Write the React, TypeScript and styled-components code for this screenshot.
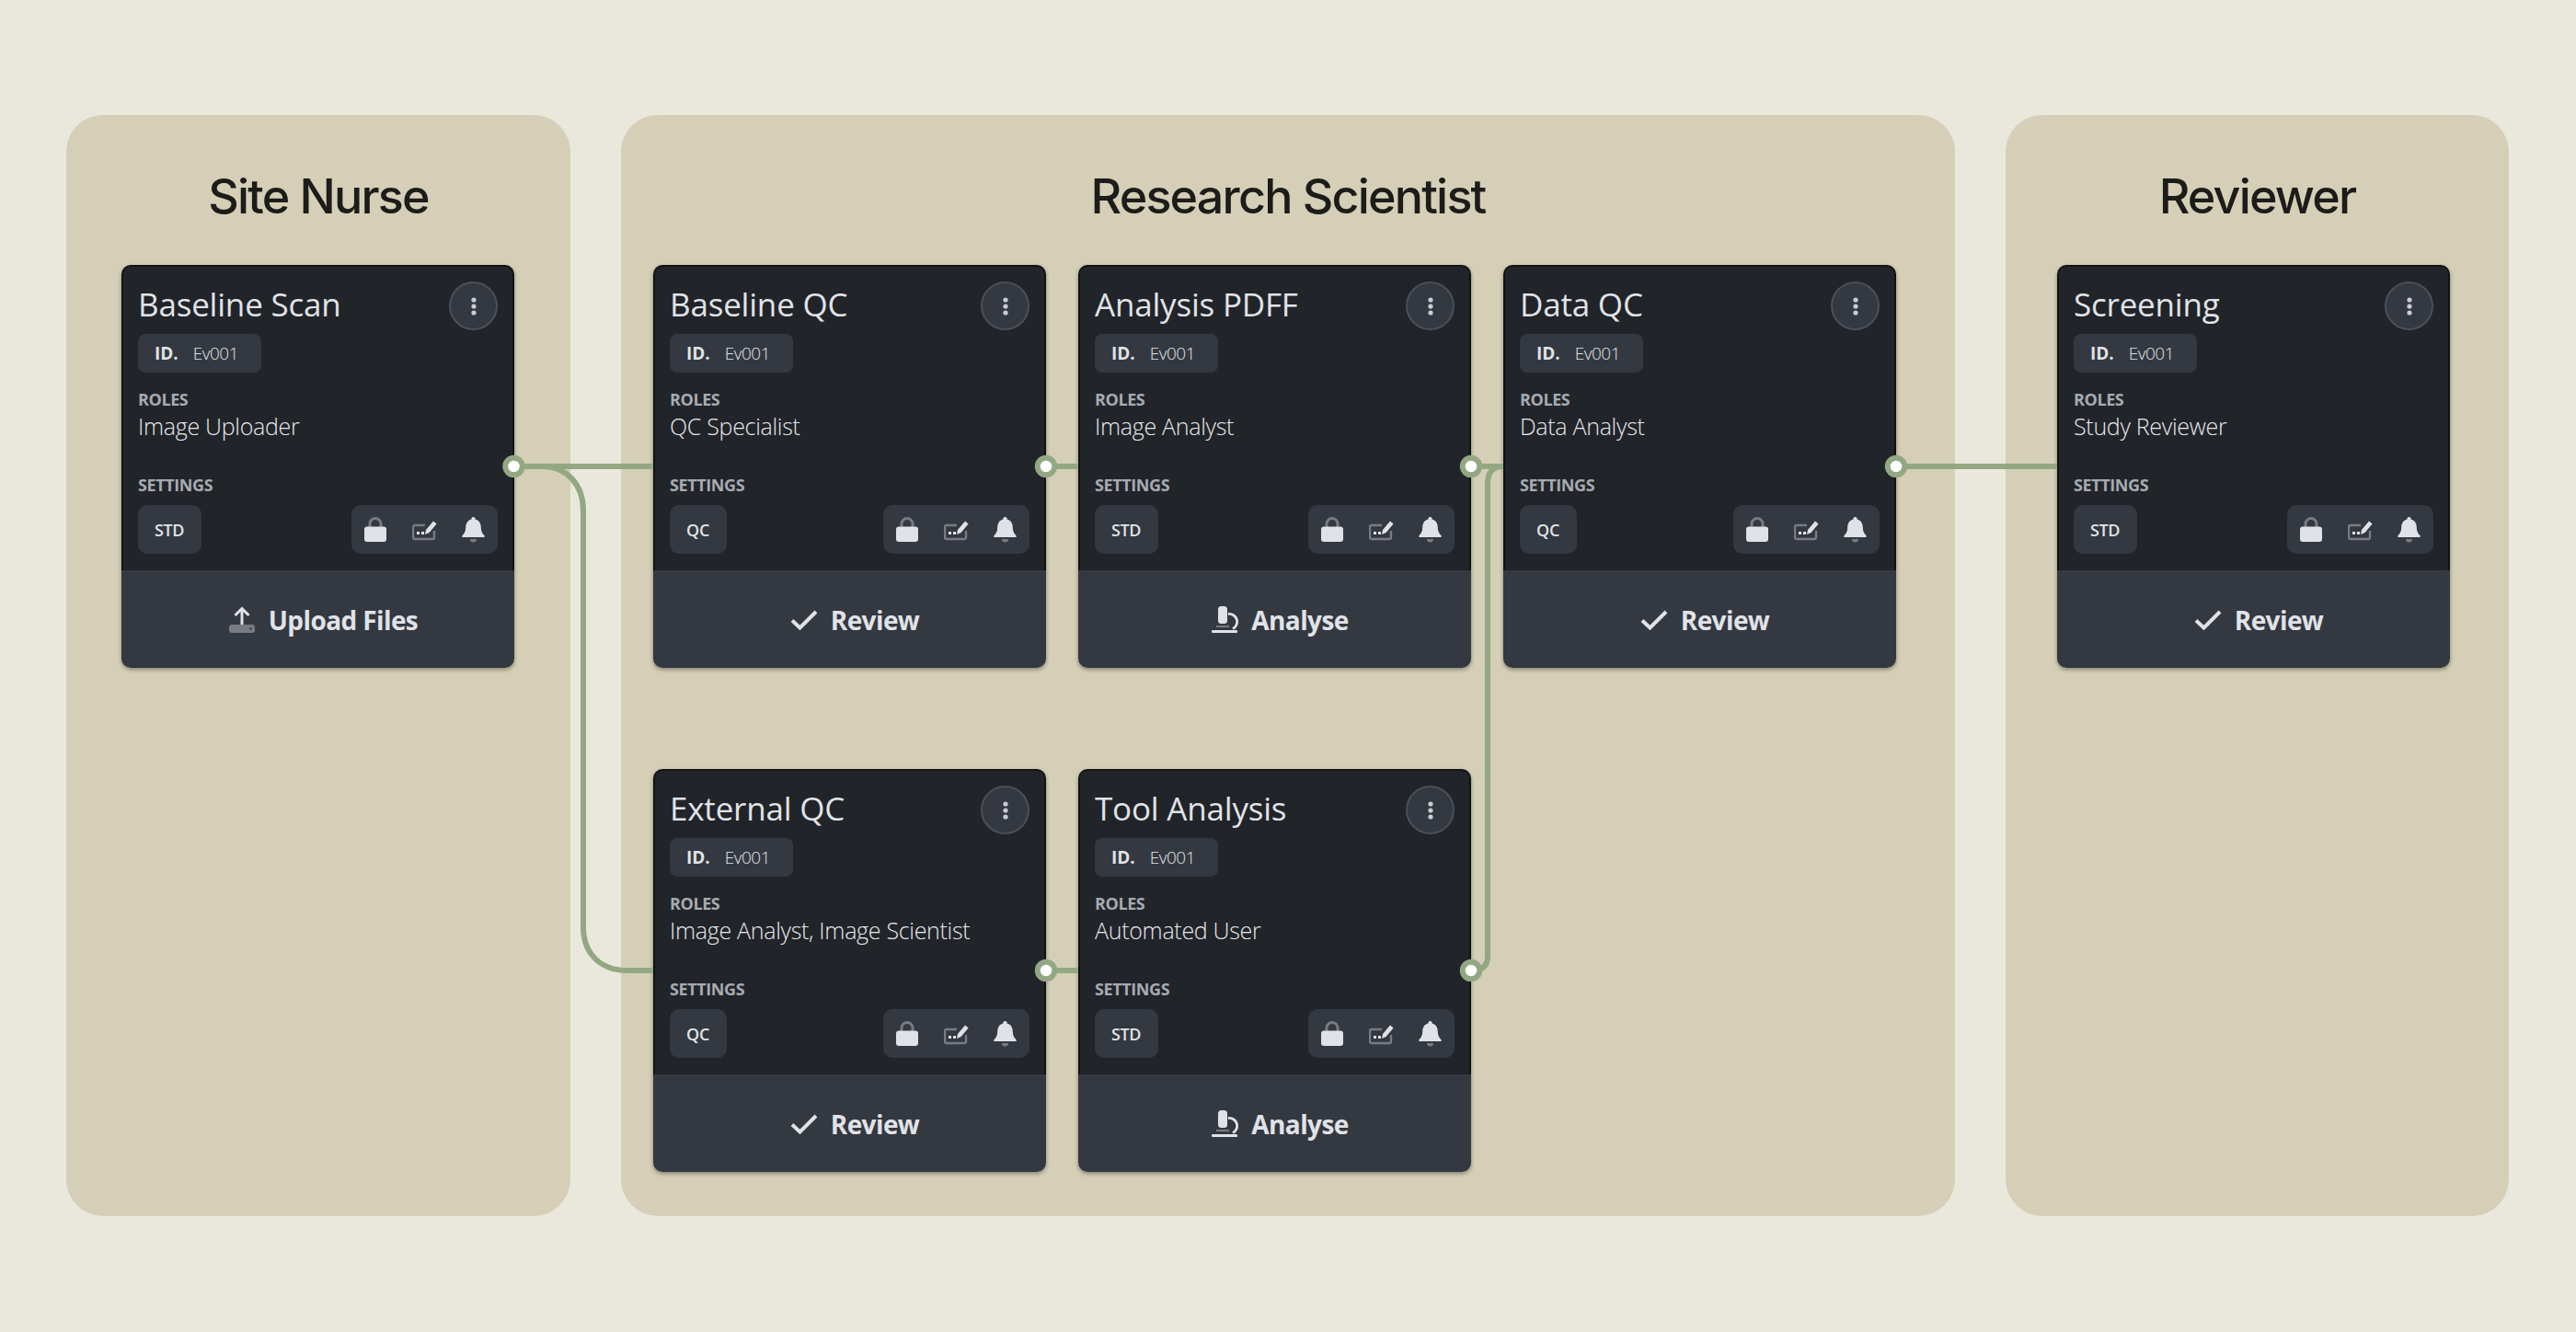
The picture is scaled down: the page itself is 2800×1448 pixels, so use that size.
import React from "react";
import styled, { createGlobalStyle } from "styled-components";

const Global = createGlobalStyle`
  html, body { margin: 0; padding: 0; background: #eae8dc; }
  * { box-sizing: border-box; }
`;

const Page = styled.div`
  position: relative;
  width: 2800px;
  height: 1448px;
  overflow: hidden;
  background: #eae8dc;
  padding: 125px 73px 0 72px;
  display: flex;
  align-items: flex-start;
  gap: 55px;
  font-family: "Open Sans", "Noto Sans", sans-serif;
`;

const Lane = styled.section<{ $w: number; $pl: number }>`
  width: ${(p) => p.$w}px;
  height: 1197px;
  flex: none;
  background: #d5cfb7;
  border-radius: 40px;
  padding-left: ${(p) => p.$pl}px;
  display: flex;
  flex-direction: column;
  align-items: flex-start;
`;

const LaneTitle = styled.h2<{ $pl: number }>`
  align-self: stretch;
  margin: 60px 0 0 ${(p) => -p.$pl}px;
  height: 103px;
  font-family: Inter, "Liberation Sans", sans-serif;
  font-size: 52px;
  line-height: 58px;
  font-weight: 450;
  letter-spacing: -1.8px;
  color: #1c1c1a;
  text-align: center;
`;

const CardGrid = styled.div<{ $cols: number }>`
  display: grid;
  grid-template-columns: repeat(${(p) => p.$cols}, 427px);
  grid-auto-rows: 438px;
  column-gap: 35px;
  row-gap: 110px;
`;

const CardBox = styled.article`
  width: 427px;
  height: 438px;
  display: flex;
  flex-direction: column;
  border-radius: 10px;
  box-shadow: 0 2px 4px rgba(40, 40, 30, 0.45);
`;

const CardBody = styled.div`
  height: 332px;
  flex: none;
  background: #212429;
  border: 2px solid #111214;
  border-bottom: none;
  border-radius: 10px 10px 0 0;
  padding: 16px 16px 0 16px;
  display: flex;
  flex-direction: column;
  color: #e0e3e7;
`;

const CardHead = styled.div`
  height: 53px;
  flex: none;
  display: flex;
  align-items: center;
  justify-content: space-between;
`;

const CardTitle = styled.h3`
  margin: 0 0 4px;
  font-size: 35px;
  line-height: 48px;
  font-weight: 500;
  letter-spacing: -0.2px;
  color: #e0e3e7;
`;

const MenuButton = styled.button`
  width: 53px;
  height: 53px;
  padding: 0;
  border-radius: 50%;
  background: #343840;
  border: 2px solid #4b4f57;
  display: flex;
  align-items: center;
  justify-content: center;
`;

const IdPill = styled.div`
  margin-top: 4px;
  width: 134px;
  height: 42px;
  flex: none;
  border-radius: 8px;
  background: #343840;
  padding-left: 18px;
  display: flex;
  align-items: center;
  gap: 16px;
  font-size: 19px;
  color: #e0e3e7;
`;

const IdKey = styled.b`
  font-weight: 700;
  color: #e0e3e7;
`;

const IdValue = styled.span`
  font-weight: 300;
  letter-spacing: -0.5px;
`;

const FieldLabel = styled.div<{ $mt: number }>`
  margin-top: ${(p) => p.$mt}px;
  height: 24px;
  line-height: 24px;
  font-size: 18px;
  font-weight: 700;
  letter-spacing: -0.4px;
  color: #a6abb2;
`;

const FieldValue = styled.div`
  height: 34px;
  line-height: 34px;
  font-size: 25px;
  font-weight: 300;
  letter-spacing: -0.3px;
  color: #e6e8eb;
  white-space: nowrap;
`;

const SettingsRow = styled.div`
  margin-top: 10px;
  height: 53px;
  flex: none;
  display: flex;
  justify-content: space-between;
`;

const Badge = styled.div`
  min-width: 62px;
  padding: 0 19px 0 18px;
  border-radius: 10px;
  background: #343840;
  display: flex;
  align-items: center;
  justify-content: center;
  font-size: 18px;
  font-weight: 600;
  letter-spacing: -0.4px;
  color: #e0e3e7;
`;

const IconTray = styled.div`
  width: 159px;
  border-radius: 10px;
  background: #343840;
  padding: 0 14px;
  display: flex;
  align-items: center;
  justify-content: space-between;
`;

const CardAction = styled.div`
  height: 106px;
  flex: none;
  background: #343840;
  border-radius: 0 0 10px 10px;
  padding: 1px 0 0 11px;
  display: flex;
  align-items: center;
  justify-content: center;
  gap: 14px;
  font-size: 28px;
  font-weight: 700;
  letter-spacing: -0.6px;
  color: #e0e3e7;
`;

const Wires = styled.svg`
  position: absolute;
  inset: 0;
  width: 2800px;
  height: 1448px;
  pointer-events: none;
`;

const LIGHT = "#dfe2e6";
const DIM = "#787c82";

const Dots = () => (
  <svg width="6" height="20" viewBox="0 0 6 20">
    <circle cx="3" cy="3" r="2.6" fill="#c9ccd1" />
    <circle cx="3" cy="10" r="2.6" fill="#c9ccd1" />
    <circle cx="3" cy="17" r="2.6" fill="#c9ccd1" />
  </svg>
);

const LockIcon = () => (
  <svg width="24" height="27" viewBox="0 0 24 27">
    <path d="M6 12V7.500a6 6 0 0 1 12 0V12" fill="none" stroke={DIM} strokeWidth="3" />
    <rect x="0" y="10.500" width="24" height="16.500" rx="3" fill={LIGHT} />
  </svg>
);

const EditIcon = () => (
  <svg width="27" height="24" viewBox="0 0 27 24">
    <path d="M14 7H3a2 2 0 0 0-2 2v11a2 2 0 0 0 2 2h19a2 2 0 0 0 2-2v-7" fill="none" stroke={DIM} strokeWidth="2.400" />
    <rect x="5" y="14" width="3" height="3" fill={LIGHT} />
    <rect x="10" y="14" width="3" height="3" fill={LIGHT} />
    <path d="M14 17l1-5 8-9.500 3.600 3-8 9.500z" fill={LIGHT} />
  </svg>
);

const BellIcon = () => (
  <svg width="25" height="28" viewBox="0 0 25 28">
    <path d="M12.500 0a2 2 0 0 1 2 2.600c4.300 1 6.300 4.500 6.300 8.900 0 4 1.500 6.400 3.700 8.700.6.700.3 1.800-.7 1.800H1.200c-1 0-1.300-1.100-.7-1.800 2.200-2.300 3.700-4.700 3.700-8.700 0-4.400 2-7.900 6.300-8.900a2 2 0 0 1 2-2.600z" fill={LIGHT} />
    <path d="M9 24h7a3.500 3.500 0 0 1-7 0z" fill={DIM} />
  </svg>
);

const CheckIcon = () => (
  <svg width="30" height="22" viewBox="0 0 30 22">
    <path d="M2 11.500l8.500 8L28 2" fill="none" stroke={LIGHT} strokeWidth="4" />
  </svg>
);

const UploadIcon = () => (
  <svg width="30" height="29" viewBox="0 0 30 29">
    <path d="M15 21V3M7.500 10L15 2.500 22.500 10" fill="none" stroke={LIGHT} strokeWidth="3" />
    <rect x="1" y="20" width="28" height="9" rx="3" fill={DIM} />
    <circle cx="24.500" cy="24.500" r="1.300" fill="#343840" />
  </svg>
);

const ScopeIcon = () => (
  <svg width="30" height="29" viewBox="0 0 30 29">
    <rect x="8" y="0" width="10" height="19" rx="3.500" fill={LIGHT} />
    <rect x="6" y="21" width="14" height="2" fill={DIM} />
    <path d="M19 8.500a8.500 8.500 0 0 1 5 16" fill="none" stroke={LIGHT} strokeWidth="2.800" />
    <rect x="1" y="26" width="28" height="3" rx="1" fill={LIGHT} />
  </svg>
);

type Kind = "upload" | "review" | "analyse";

const actions: Record<Kind, { label: string; icon: React.ReactNode }> = {
  upload: { label: "Upload Files", icon: <UploadIcon /> },
  review: { label: "Review", icon: <CheckIcon /> },
  analyse: { label: "Analyse", icon: <ScopeIcon /> },
};

type CardData = { title: string; roles: string; badge: string; kind: Kind };

const Card = ({ title, roles, badge, kind }: CardData) => (
  <CardBox>
    <CardBody>
      <CardHead>
        <CardTitle>{title}</CardTitle>
        <MenuButton aria-label="menu">
          <Dots />
        </MenuButton>
      </CardHead>
      <IdPill>
        <IdKey>ID.</IdKey>
        <IdValue>Ev001</IdValue>
      </IdPill>
      <FieldLabel $mt={17}>ROLES</FieldLabel>
      <FieldValue>{roles}</FieldValue>
      <FieldLabel $mt={35}>SETTINGS</FieldLabel>
      <SettingsRow>
        <Badge>{badge}</Badge>
        <IconTray>
          <LockIcon />
          <EditIcon />
          <BellIcon />
        </IconTray>
      </SettingsRow>
    </CardBody>
    <CardAction>
      {actions[kind].icon}
      {actions[kind].label}
    </CardAction>
  </CardBox>
);

const lanes: { title: string; w: number; pl: number; cols: number; cards: CardData[] }[] = [
  {
    title: "Site Nurse",
    w: 548,
    pl: 60,
    cols: 1,
    cards: [{ title: "Baseline Scan", roles: "Image Uploader", badge: "STD", kind: "upload" }],
  },
  {
    title: "Research Scientist",
    w: 1450,
    pl: 35,
    cols: 3,
    cards: [
      { title: "Baseline QC", roles: "QC Specialist", badge: "QC", kind: "review" },
      { title: "Analysis PDFF", roles: "Image Analyst", badge: "STD", kind: "analyse" },
      { title: "Data QC", roles: "Data Analyst", badge: "QC", kind: "review" },
      { title: "External QC", roles: "Image Analyst, Image Scientist", badge: "QC", kind: "review" },
      { title: "Tool Analysis", roles: "Automated User", badge: "STD", kind: "analyse" },
    ],
  },
  {
    title: "Reviewer",
    w: 547,
    pl: 56,
    cols: 1,
    cards: [{ title: "Screening", roles: "Study Reviewer", badge: "STD", kind: "review" }],
  },
];

const wirePaths = [
  "M558 507H710",
  "M590 507C615 507 634 526 634 555V1008C634 1036 652 1055 682 1055H710",
  "M1137 507H1172",
  "M1137 1055H1172",
  "M1599 507H1634",
  "M1634 507C1623 507 1617 513 1617 525V1040C1617 1050 1611 1055 1599 1055",
  "M2061 507H2236",
];

const pins: [number, number][] = [
  [558.5, 507],
  [1137, 507],
  [1599, 507],
  [2061, 507],
  [1137, 1055],
  [1599, 1055],
];

export default function App() {
  return (
    <Page>
      <Global />
      {lanes.map((lane) => (
        <Lane key={lane.title} $w={lane.w} $pl={lane.pl}>
          <LaneTitle $pl={lane.pl}>{lane.title}</LaneTitle>
          <CardGrid $cols={lane.cols}>
            {lane.cards.map((c) => (
              <Card key={c.title} {...c} />
            ))}
          </CardGrid>
        </Lane>
      ))}
      <Wires viewBox="0 0 2800 1448">
        {wirePaths.map((d) => (
          <path key={d} d={d} fill="none" stroke="#93a882" strokeWidth="6" />
        ))}
        {pins.map(([x, y]) => (
          <circle key={`${x}-${y}`} cx={x} cy={y} r="9.250" fill="#fff" stroke="#93a882" strokeWidth="6" />
        ))}
      </Wires>
    </Page>
  );
}
